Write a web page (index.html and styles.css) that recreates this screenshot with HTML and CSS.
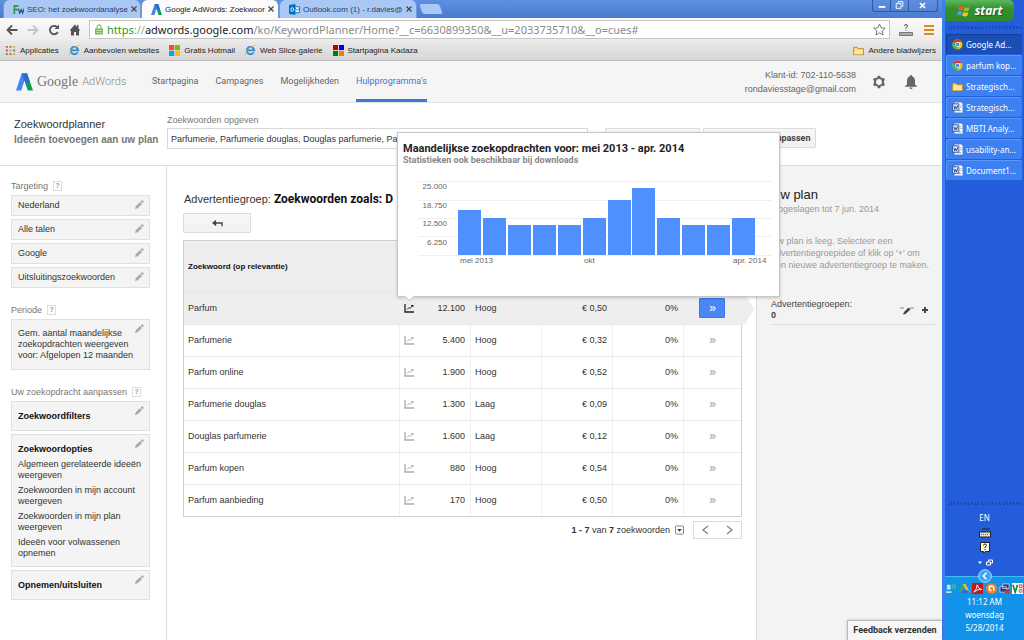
FILE: index.html
```html
<!DOCTYPE html>
<html lang="nl">
<head>
<meta charset="utf-8">
<title>Google AdWords: Zoekwoordplanner</title>
<link rel="stylesheet" href="styles.css">
</head>
<body>
<svg class="defs" aria-hidden="true">
  <symbol id="pencil" viewBox="0 0 10 10"><path d="M0 10l.8-3L5.6 2.200l2.200 2.200L3 9.200zM6.300 1.600L7.300.6q.7-.6 1.400 0l.7.7q.6.7 0 1.400l-1 1z"/></symbol>
  <symbol id="trend" viewBox="0 0 10 9"><path d="M1 0v8h9" fill="none" stroke="currentColor" stroke-width="1.300"/><path d="M3 5.500l2-2 1 1L8.500 2M7 1.500h2V3" fill="none" stroke="currentColor"/></symbol>
  <symbol id="aw" viewBox="0 0 18 18"><path d="M6 0h5.500l-6 18H0z" fill="#4285f4"/><path d="M6.500 0h5.300L18 18h-5.500L9 8z" fill="#0f9d58"/><path d="M6.500 0h5.300l2.500 7.500-2 3L9 8z" fill="#3367d6"/></symbol>
  <symbol id="chrome" viewBox="0 0 12 12"><circle cx="6" cy="6" r="5.500" fill="#f4c20d"/><path d="M6 6L1.200 3.200A5.500 5.500 0 0 1 10.800 3.300H6z" fill="#db3236"/><path d="M6 6L1.200 3.200A5.500 5.500 0 0 0 5.500 11.500L8 7z" fill="#3cba54"/><circle cx="6" cy="6" r="2.600" fill="#fff"/><circle cx="6" cy="6" r="2" fill="#4885ed"/></symbol>
  <symbol id="folder" viewBox="0 0 12 10"><path d="M.5 9.500v-8h4l1 1.500h6v6.500z" fill="#fbd976" stroke="#b98a2c"/><path d="M1 9l1.500-4.500H11L10.500 9z" fill="#ffe9a0"/></symbol>
  <symbol id="word" viewBox="0 0 12 12"><path d="M3 .5h7l1.500 1.500v9.500H3z" fill="#fff" stroke="#aac0e6"/><path d="M6 9.500h4M9 4h1.500M9 6h1.500" stroke="#8097c8"/><path d="M.5 2h7v7h-7z" fill="#dfe8fa" stroke="#36518f"/><path d="M2 4l1 3.500L4 5l1 2.500L6.300 3.500" fill="none" stroke="#27427f"/></symbol>
  <symbol id="ie" viewBox="0 0 12 12"><path d="M9.500 8A4 4 0 1 1 10 5.800H3" fill="none" stroke="#2e8ad8" stroke-width="2"/><path d="M1 11Q-1 8 5 3.500T11 1.500" fill="none" stroke="#e7b93c"/></symbol>
</svg>

<div class="browser">
  <div class="tabstrip">
    <div class="tab">
      <svg class="ico" viewBox="0 0 12 10"><path d="M1.500 10V1h4.500M1.500 5.200h4" fill="none" stroke="#2e9a3a" stroke-width="1.800"/><path d="M6 4l1.300 5L9 5l1.500 4L12 4" fill="none" stroke="#26506e" stroke-width="1.200"/></svg>
      <span class="tab-name">SEO: het zoekwoordanalyse</span><button class="x" aria-label="Sluiten"><svg viewBox="0 0 6 6"><path d="M.5.5l5 5M5.500.5l-5 5" stroke="#444" stroke-width="1.200"/></svg></button>
    </div>
    <div class="tab active">
      <svg class="ico"><use href="#aw"/></svg>
      <span class="tab-name">Google AdWords: Zoekwoor</span><button class="x" aria-label="Sluiten"><svg viewBox="0 0 6 6"><path d="M.5.5l5 5M5.500.5l-5 5" stroke="#444" stroke-width="1.200"/></svg></button>
    </div>
    <div class="tab">
      <svg class="ico" viewBox="0 0 12 12"><path d="M6 3h5.500v6.500H6z" fill="#fff" stroke="#0072c6"/><path d="M6 4l3 3 3-3" fill="none" stroke="#0072c6"/><path d="M0 1.200L7 0v12L0 10.800z" fill="#0072c6"/><ellipse cx="3.500" cy="6" rx="1.500" ry="2" fill="none" stroke="#fff"/></svg>
      <span class="tab-name">Outlook.com (1) - r.davies@</span><button class="x" aria-label="Sluiten"><svg viewBox="0 0 6 6"><path d="M.5.5l5 5M5.500.5l-5 5" stroke="#444" stroke-width="1.200"/></svg></button>
    </div>
    <div class="newtab"></div>
    <div class="winbtns">
      <button aria-label="Minimaliseren"><svg viewBox="0 0 18 11"><path d="M6 7h7" stroke="#fff" stroke-width="2"/></svg></button>
      <button aria-label="Herstellen"><svg viewBox="0 0 18 11"><path d="M7.500 2.500v-1h5v5h-1M5.500 3.500h5v5h-5z" fill="none" stroke="#fff"/></svg></button>
      <button class="wide" aria-label="Venster sluiten"><svg viewBox="0 0 28 11"><path d="M11 3l5 5M16 3l-5 5" stroke="#fff" stroke-width="1.600"/></svg></button>
    </div>
  </div>

  <div class="toolbar">
    <button class="nav" aria-label="Terug"><svg viewBox="0 0 12 12"><path d="M11.500 6H2M6 1.500L1.500 6 6 10.500" fill="none" stroke="#555" stroke-width="1.800"/></svg></button>
    <button class="nav" aria-label="Vooruit"><svg viewBox="0 0 12 12"><path d="M.5 6H10M6 1.500L10.500 6 6 10.500" fill="none" stroke="#c4c4c4" stroke-width="1.800"/></svg></button>
    <button class="nav" aria-label="Vernieuwen"><svg viewBox="0 0 12 12"><path d="M9.800 8A4.200 4.200 0 1 1 9 3" fill="none" stroke="#555" stroke-width="1.800"/><path d="M11 .5V5H6.500z" fill="#555"/></svg></button>
    <button class="nav" aria-label="Startpagina"><svg viewBox="0 0 12 12"><path d="M6 .5L.5 6.500H2V11.500h3V8h2v3.500h3V6.500h1.500L9.500 4.500V1H8v2z" fill="#555"/></svg></button>
    <div class="omnibox">
      <svg class="lock" viewBox="0 0 8 11"><path d="M2 5V3a2 2 0 0 1 4 0v2" fill="none" stroke="#8fc27d" stroke-width="1.300"/><path d="M0 4.500h8v6H0z" fill="#79bd62"/><path d="M1 6.500h6M1 8.500h6" stroke="#b4dba5"/></svg>
      <span class="url"><i>https</i><s>://</s><b>adwords.google.com</b>/ko/KeywordPlanner/Home?__c=6630899350&amp;__u=2033735710&amp;__o=cues#</span>
      <svg class="star" viewBox="0 0 13 13"><path d="M6.500 1l1.700 3.800 4 .4-3 2.700.9 4.100-3.600-2.100L2.900 12l.9-4.100-3-2.700 4-.4z" fill="#fff" stroke="#777"/></svg>
    </div>
    <svg class="ext" viewBox="0 0 14 12"><path d="M.5 8.500h13v3H.5z" fill="#aaa" stroke="#777"/><path d="M5.500 2q0-1.500 1.500-1.500T8.500 2Q8.500 3 7 3.500v1M7 5.500v1" fill="none" stroke="#555"/></svg>
    <svg class="burger" viewBox="0 0 10 10"><path d="M0 1h10M0 5h10M0 9h10" stroke="#dc8a1c" stroke-width="2"/></svg>
  </div>

  <div class="bookmarks">
    <a href="#"><svg class="ico" viewBox="0 0 12 12"><path d="M1 2h2M1 6h2M5 10h2" stroke="#db4437" stroke-width="2"/><path d="M5 2h2M9 6h2M1 10h2" stroke="#3b9a4c" stroke-width="2"/><path d="M9 2h2M5 6h2M9 10h2" stroke="#e6a021" stroke-width="2"/></svg>Applicaties</a>
    <a href="#"><svg class="ico"><use href="#ie"/></svg>Aanbevolen websites</a>
    <a href="#"><svg class="ico" viewBox="0 0 12 12"><path d="M0 0h5.600v5.600H0z" fill="#f25022"/><path d="M6.400 0H12v5.600H6.400z" fill="#7fba00"/><path d="M0 6.400h5.600V12H0z" fill="#00a4ef"/><path d="M6.400 6.400H12V12H6.400z" fill="#ffb900"/></svg>Gratis Hotmail</a>
    <a href="#"><svg class="ico"><use href="#ie"/></svg>Web Slice-galerie</a>
    <a href="#"><svg class="ico" viewBox="0 0 12 12"><path d="M0 0h5.500v5.500H0z" fill="#c00000"/><path d="M6.500 0H12v5.500H6.500z" fill="#0000e0"/><path d="M0 6.500h5.500V12H0z" fill="#008000"/><path d="M6.500 6.500H12V12H6.500z" fill="#ff7800"/></svg>Startpagina Kadaza</a>
    <a href="#" class="end"><svg class="ico"><use href="#folder"/></svg>Andere bladwijzers</a>
  </div>

  <div class="page">
    <header class="top">
      <a class="logo" href="#"><svg><use href="#aw"/></svg><span class="goog">Google</span><span class="adw">AdWords</span></a>
      <nav class="menu"><a href="#">Startpagina</a><a href="#">Campagnes</a><a href="#">Mogelijkheden</a><a href="#" class="on">Hulpprogramma's</a></nav>
      <div class="account"><div>Klant-id: 702-110-5638</div><div>rondaviesstage@gmail.com</div></div>
      <button class="plain" aria-label="Instellingen"><svg viewBox="0 0 14 14"><circle cx="7" cy="7" r="4" fill="none" stroke="#666" stroke-width="2.200"/><path d="M7 .8v2M7 11.200v2M1.600 3.900l1.800 1M10.600 9.100l1.800 1M1.600 10.100l1.800-1M10.600 4.900l1.800-1" stroke="#666" stroke-width="2.600"/></svg></button>
      <button class="plain" aria-label="Meldingen"><svg viewBox="0 0 14 14"><path d="M7 0q1.200 0 1.200 1.200Q11 2.200 11 6v3.500l2 1.500v.8H1V11l2-1.500V6q0-3.800 2.800-4.800Q5.800 0 7 0zM5.300 12.500h3.400Q8.500 14 7 14t-1.700-1.500z" fill="#666"/></svg></button>
    </header>

    <section class="planner">
      <div class="name"><h1>Zoekwoordplanner</h1><p>Ideeën toevoegen aan uw plan</p></div>
      <form class="search">
        <label for="kw">Zoekwoorden opgeven</label>
        <div class="search-row">
          <input id="kw" type="text" value="Parfumerie, Parfumerie douglas, Douglas parfumerie, Parfum">
          <button type="button" class="btn">Ideeën ophalen</button>
          <button type="button" class="btn wide">Zoekopdracht aanpassen</button>
        </div>
      </form>
    </section>

    <div class="body">
      <aside class="side">
        <h2>Targeting <button class="q">?</button></h2>
        <div class="stack">
          <div class="card">Nederland<svg><use href="#pencil"/></svg></div>
          <div class="card">Alle talen<svg><use href="#pencil"/></svg></div>
          <div class="card">Google<svg><use href="#pencil"/></svg></div>
          <div class="card">Uitsluitingszoekwoorden<svg><use href="#pencil"/></svg></div>
        </div>
        <h2>Periode <button class="q">?</button></h2>
        <div class="stack">
          <div class="card tall">Gem. aantal maandelijkse zoekopdrachten weergeven voor: Afgelopen 12 maanden<svg><use href="#pencil"/></svg></div>
        </div>
        <h2>Uw zoekopdracht aanpassen <button class="q">?</button></h2>
        <div class="stack">
          <div class="card mid"><b>Zoekwoordfilters</b><svg><use href="#pencil"/></svg></div>
          <div class="card mid options"><b>Zoekwoordopties</b>
            <p>Algemeen gerelateerde ideeën weergeven</p><p>Zoekwoorden in mijn account weergeven</p><p>Zoekwoorden in mijn plan weergeven</p><p>Ideeën voor volwassenen opnemen</p><svg><use href="#pencil"/></svg></div>
          <div class="card mid"><b>Opnemen/uitsluiten</b><svg><use href="#pencil"/></svg></div>
        </div>
      </aside>

      <main class="main">
        <h2 class="group">Advertentiegroep: <b>Zoekwoorden zoals: D</b></h2>
        <button class="btn back" aria-label="Terug"><svg viewBox="0 0 12 8"><path d="M11 7.500V4H2" fill="none" stroke="#444" stroke-width="1.500"/><path d="M4.500.5v7L0 4z" fill="#444"/></svg></button>
        <table class="kw">
          <colgroup><col><col class="c"><col class="c"><col class="c"><col class="c"><col class="d"></colgroup>
          <thead><tr><th colspan="6">Zoekwoord (op relevantie)</th></tr></thead>
          <tbody>
            <tr class="sel"><td>Parfum</td><td><div class="vol"><svg><use href="#trend"/></svg>12.100</div></td><td>Hoog</td><td class="r">€ 0,50</td><td class="r">0%</td><td class="m"><button class="add">»</button></td></tr>
            <tr><td>Parfumerie</td><td><div class="vol"><svg><use href="#trend"/></svg>5.400</div></td><td>Hoog</td><td class="r">€ 0,32</td><td class="r">0%</td><td class="m"><button class="add">»</button></td></tr>
            <tr><td>Parfum online</td><td><div class="vol"><svg><use href="#trend"/></svg>1.900</div></td><td>Hoog</td><td class="r">€ 0,52</td><td class="r">0%</td><td class="m"><button class="add">»</button></td></tr>
            <tr><td>Parfumerie douglas</td><td><div class="vol"><svg><use href="#trend"/></svg>1.300</div></td><td>Laag</td><td class="r">€ 0,09</td><td class="r">0%</td><td class="m"><button class="add">»</button></td></tr>
            <tr><td>Douglas parfumerie</td><td><div class="vol"><svg><use href="#trend"/></svg>1.600</div></td><td>Laag</td><td class="r">€ 0,12</td><td class="r">0%</td><td class="m"><button class="add">»</button></td></tr>
            <tr><td>Parfum kopen</td><td><div class="vol"><svg><use href="#trend"/></svg>880</div></td><td>Hoog</td><td class="r">€ 0,54</td><td class="r">0%</td><td class="m"><button class="add">»</button></td></tr>
            <tr><td>Parfum aanbieding</td><td><div class="vol"><svg><use href="#trend"/></svg>170</div></td><td>Hoog</td><td class="r">€ 0,50</td><td class="r">0%</td><td class="m"><button class="add">»</button></td></tr>
          </tbody>
        </table>
        <div class="pager"><span><b>1 - 7</b> van <b>7</b> zoekwoorden</span>
          <button class="drop" aria-label="Rijen"><svg viewBox="0 0 10 10"><rect x=".5" y=".5" width="9" height="9" rx="1" fill="#fff" stroke="#777"/><path d="M2.500 4h5L5 7z" fill="#333"/></svg></button>
          <div class="pages"><button aria-label="Vorige"><svg viewBox="0 0 8 10"><path d="M6.500 1l-5 4 5 4" fill="none" stroke="#888" stroke-width="1.400"/></svg></button><button aria-label="Volgende"><svg viewBox="0 0 8 10"><path d="M1.500 1l5 4-5 4" fill="none" stroke="#888" stroke-width="1.400"/></svg></button></div>
        </div>

        <div class="popup">
          <h3>Maandelijkse zoekopdrachten voor: mei 2013 - apr. 2014</h3>
          <p>Statistieken ook beschikbaar bij downloads</p>
          <svg class="chart" viewBox="0 0 354 88">
            <path d="M0 1.500h354M0 20.500h354M0 38.500h354M0 56.500h354M0 75.500h354" stroke="#efefef"/>
            <g class="bars">
              <rect x="40" y="30" width="23" height="45"/><rect x="65" y="38" width="23" height="37"/><rect x="90" y="45" width="23" height="30"/><rect x="115" y="45" width="23" height="30"/><rect x="140" y="45" width="23" height="30"/><rect x="165" y="38" width="23" height="37"/><rect x="190" y="20" width="23" height="55"/><rect x="214" y="8" width="23" height="67"/><rect x="239" y="38" width="23" height="37"/><rect x="264" y="45" width="23" height="30"/><rect x="289" y="45" width="23" height="30"/><rect x="314" y="38" width="23" height="37"/>
            </g>
            <g class="ylab"><text x="29" y="9">25.000</text><text x="29" y="28">18.750</text><text x="29" y="46">12.500</text><text x="29" y="65">6.250</text></g>
            <g class="xlab"><text x="42" y="83">mei 2013</text><text x="166" y="83">okt</text><text x="315" y="83">apr. 2014</text></g>
          </svg>
        </div>
      </main>

      <aside class="plan">
        <h2>Uw plan</h2>
        <p class="saved">Opgeslagen tot 7 jun. 2014</p>
        <p class="empty">Uw plan is leeg. Selecteer een advertentiegroepidee of klik op '+' om een nieuwe advertentiegroep te maken.</p>
        <div class="groups"><div>Advertentiegroepen:<br><b>0</b></div>
          <div class="tools"><button class="plain" aria-label="Bewerken"><svg class="quote" viewBox="0 0 14 9"><path d="M1 1v2M3 1v2M11 1v2M13 1v2" stroke="#888"/><path d="M3 8.500L4 6l4.500-4.500L10.500 3.500 5.500 8z" fill="#444"/></svg></button><button class="plain" aria-label="Toevoegen"><svg class="plus" viewBox="0 0 8 8"><path d="M4 1v6M1 4h6" stroke="#444" stroke-width="2"/></svg></button></div>
        </div>
      </aside>
    </div>
    <button class="feedback">Feedback verzenden</button>
  </div>
</div>

<div class="taskbar">
  <button class="start"><svg viewBox="0 0 14 12"><path d="M2 1.500q2.500-1 4.500.3L5.500 5.500Q3.500 4.500 1 5.300z" fill="#ee5b25"/><path d="M7.500 2q2 1.300 5 .3L11.500 6q-2.500 1-5-.3z" fill="#8cc63f"/><path d="M.8 6.500q2.500-1 4.500.3L4.300 10.500Q2.300 9.500 0 10.300z" fill="#4aa0e8"/><path d="M6.200 7q2.300 1.300 5 .3L10.300 11q-2.500 1-5-.3z" fill="#fdc60b"/></svg>start</button>
  <div class="zig"></div>
  <div class="tasks">
    <button class="task cur"><svg><use href="#chrome"/></svg>Google Ad...</button>
    <button class="task"><svg><use href="#chrome"/></svg>parfum kop...</button>
    <button class="task"><svg><use href="#folder"/></svg>Strategisch...</button>
    <button class="task"><svg><use href="#word"/></svg>Strategisch...</button>
    <button class="task"><svg><use href="#word"/></svg>MBTI Analy...</button>
    <button class="task"><svg><use href="#word"/></svg>usability-an...</button>
    <button class="task"><svg><use href="#word"/></svg>Document1...</button>
  </div>
  <div class="zig low"></div>
  <div class="lang"><span>EN</span>
    <svg viewBox="0 0 12 10"><path d="M3 1.500h8" stroke="#222"/><path d="M.5 4.500h11v5H.5z" fill="#e8e6d0" stroke="#222"/><path d="M2 7h8" stroke="#555" stroke-dasharray="1 1"/></svg>
    <svg viewBox="0 0 12 11"><path d="M1.500.5h9v9h-4l-2 1.500v-1.500h-3z" fill="#fffbd8" stroke="#222"/><path d="M4.500 3.500Q4.500 2 6 2t1.500 1.500Q7.500 4.500 6 5v1M6 7v1.200" fill="none" stroke="#222"/></svg>
    <svg class="mini" viewBox="0 0 16 8"><path d="M1 3h4L3 5.500z" fill="#fff"/><path d="M9.500 3.500h4v3h-4zM11.500 3V1.500h4v3H14" fill="none" stroke="#fff"/></svg>
  </div>
  <div class="tray">
    <button class="collapse" aria-label="Verbergen"><svg viewBox="0 0 14 14"><circle cx="7" cy="7" r="6.300" fill="#38a6f2" stroke="#b9e2ff"/><path d="M8.500 3.800L5.300 7l3.200 3.200" fill="none" stroke="#fff" stroke-width="1.600"/></svg></button>
    <div class="tray-icons">
      <svg viewBox="0 0 12 12"><path d="M1 2h4v5H1zM0 9h6v2H0z" fill="#bfe0ee"/><path d="M7 2q1.500 2 0 4M9 1q2.500 3 0 6" fill="none" stroke="#5fe06a"/></svg>
      <svg viewBox="0 0 12 12"><path d="M4 1L0 9l2 2 4-8z" fill="#3aa757"/><path d="M4 1h3l5 9H9z" fill="#fbc116"/><path d="M4 8h7l-1 3H2z" fill="#2a6fe0"/></svg>
      <svg viewBox="0 0 12 12"><path d="M0 0h12v12H0z" fill="#c4161c"/><path d="M2 10Q6 6 5.500 2q2 5 5 5Q6 6.500 2 10z" fill="none" stroke="#fff"/></svg>
      <svg viewBox="0 0 12 12"><circle cx="6" cy="6" r="5.800" fill="#f58220"/><path d="M8.500 8.500V5.500A2.500 2.500 0 1 0 6 8.300" fill="none" stroke="#fff" stroke-width="1.500"/></svg>
      <svg viewBox="0 0 12 12"><path d="M4 1h7v5H4zM1 4h7v6H1z" fill="#253b78" stroke="#b8c8e8"/><path d="M7 7l4 4M11 7l-4 4" stroke="#e02020" stroke-width="1.800"/></svg>
      <svg viewBox="0 0 12 12"><path d="M0 0h12v12H0z" fill="#fff"/><path d="M1 2l2.500 8L6 2" fill="none" stroke="#168a2c" stroke-width="1.800"/><path d="M8 2h3v3H8zM8 7h3v3H8z" fill="none" stroke="#d33"/></svg>
    </div>
    <div>11:12 AM</div><div>woensdag</div><div>5/28/2014</div>
  </div>
</div>
</body>
</html>
```

FILE: styles.css
```css
* { box-sizing: border-box; }
body { margin: 0; height: 100vh; display: flex; overflow: hidden; font: 9px/11px "Liberation Sans", Arial, sans-serif; color: #333; }
h1, h2, h3, p { margin: 0; font-weight: normal; font-size: inherit; }
button { font: inherit; color: inherit; padding: 0; margin: 0; border: 0; background: none; }
a { color: inherit; text-decoration: none; }
svg { display: block; flex: none; }
.defs { position: absolute; width: 0; height: 0; }

.browser { flex: 1; min-width: 0; display: flex; flex-direction: column; }
.toolbar, .taskbar { font-family: "Noto Sans", Tahoma, sans-serif; }
.ico { width: 11px; height: 11px; }

.tabstrip { height: 18px; flex: none; display: flex; background: linear-gradient(#5e8fdf, #4a7bd0); padding-left: 3px; font-size: 8px; }
.tab { width: 138px; height: 18px; display: flex; align-items: center; gap: 3px; padding: 0 7px 0 9px; background: #a9c8f5; color: #2c3e5c; border-radius: 6px 6px 0 0; border: solid #7099d8; border-width: 0 1px; }
.tab.active { background: #fbfbfb; color: #222; }
.tab-name { flex: 1; white-space: nowrap; }
.x svg { width: 6px; height: 6px; }
.newtab { width: 20px; height: 10px; margin: 4px 0 0 4px; background: #a9c8f5; transform: skewX(20deg); border-radius: 2px; }
.winbtns { margin-left: auto; margin-right: 4px; height: 12px; display: flex; border: 1px solid #3158a4; border-top: 0; border-radius: 0 0 3px 3px; }
.winbtns button { width: 18px; border-right: 1px solid #3158a4; }
.winbtns .wide { width: 28px; border-right: 0; }
.winbtns svg { width: 100%; height: 11px; }

.toolbar { height: 23px; flex: none; display: flex; align-items: center; gap: 9px; padding: 0 8px 0 6px; background: linear-gradient(#fafafa, #ececec); }
.nav svg { width: 12px; height: 12px; }
.omnibox { flex: 1; min-width: 0; height: 19px; margin-left: -1px; display: flex; align-items: center; gap: 4px; padding: 0 3px 0 5px; background: #fff; border: 1px solid #c4c4c4; }
.lock { width: 8px; height: 11px; }
.url { flex: 1; min-width: 0; overflow: hidden; white-space: nowrap; font-size: 11px; line-height: 16px; color: #8a8a8a; }
.url b { font-weight: normal; color: #222; }
.url i { font-style: normal; color: #2c9a2c; }
.url s { text-decoration: none; color: #77b877; }
.star { width: 13px; height: 13px; }
.ext { width: 14px; height: 12px; }
.burger { width: 10px; height: 10px; margin-left: 2px; }

.bookmarks { height: 20px; flex: none; display: flex; align-items: center; gap: 10px; padding: 0 6px 0 5px; background: linear-gradient(#e9e9e9, #d6d6d6); border-bottom: 1px solid #bbb; font-size: 8px; color: #222; }
.bookmarks a { display: flex; align-items: center; gap: 4px; white-space: nowrap; }
.bookmarks .end { margin-left: auto; }

.page { flex: 1; min-height: 0; position: relative; display: flex; flex-direction: column; background: #fff; }
.top { height: 42px; flex: none; display: flex; align-items: center; padding: 0 24px 0 16px; background: #f5f5f5; border-bottom: 1px solid #e2e2e2; color: #666; }
.logo { display: flex; align-items: center; gap: 4px; width: 136px; color: #777; }
.logo svg { width: 17px; height: 18px; }
.goog { font: 14px/18px "Liberation Serif", serif; }
.adw { font: 300 11px/18px Roboto, sans-serif; color: #888; }
.menu { flex: 1; display: flex; gap: 17px; align-self: stretch; font-family: Roboto, sans-serif; }
.menu a { display: flex; align-items: center; border: solid transparent; border-width: 3px 0; }
.menu .on { color: #4076d6; border-bottom-color: #4076d6; }
.account { text-align: right; line-height: 14px; margin-right: 16px; }
.plain svg { width: 14px; height: 14px; }
.top .plain + .plain { margin-left: 18px; }

.planner { height: 63px; flex: none; display: flex; border-bottom: 1px solid #dcdcdc; }
.name { width: 167px; flex: none; padding: 13px 0 0 14px; color: #777; }
.name h1 { font-size: 11px; line-height: 16px; color: #333; }
.name p { font-size: 10px; font-weight: bold; line-height: 16px; white-space: nowrap; }
.search { flex: 1; min-width: 0; padding: 11px 126px 0 0; color: #777; }
.search label { display: block; line-height: 12px; }
.search-row { display: flex; gap: 3px; margin-top: 2px; }
.search-row input { flex: 1; min-width: 0; height: 21px; margin-right: 14px; padding: 0 3px; border: 1px solid #d9d9d9; font: inherit; color: #333; }
.btn { width: 95px; height: 20px; background: linear-gradient(#f7f7f7, #f1f1f1); border: 1px solid #dcdcdc; border-radius: 1px; font-family: Roboto, sans-serif; font-weight: bold; color: #444; }
.btn.wide { width: 113px; }

.body { flex: 1; min-height: 0; display: flex; }
.side { width: 167px; flex: none; padding: 14px 16px 0 11px; border-right: 1px solid #dcdcdc; }
.side h2 { display: flex; align-items: center; gap: 5px; height: 12px; margin-bottom: 3px; color: #777; white-space: nowrap; }
.q { width: 9px; height: 10px; border: 1px solid #ddd; font-size: 7px; line-height: 8px; font-weight: bold; color: #999; }
.stack { display: flex; flex-direction: column; gap: 3px; margin-bottom: 16px; }
.card { position: relative; min-height: 21px; padding: 4px 6px; background: #f4f4f4; border: 1px solid #e0e0e0; }
.card > svg { position: absolute; top: 4px; right: 5px; width: 9px; height: 9px; fill: #aaa; }
.tall { padding: 8px 10px 8px 6px; min-height: 51px; }
.mid { padding: 9px 3px 8px 6px; min-height: 29px; }
.mid b { color: #111; }
.options p { margin-top: 4px; }
.options { padding-bottom: 7px; }

.main { flex: 1; min-width: 0; position: relative; padding: 25px 14px 0 16px; }
.group { font-size: 11px; line-height: 16px; white-space: nowrap; padding-left: 1px; margin-bottom: 6px; }
.group b { font-family: Roboto, sans-serif; font-size: 12px; color: #111; }
.back { width: 68px; display: flex; align-items: center; justify-content: center; }
.back svg { width: 11px; height: 8px; }
.kw { width: 100%; margin-top: 7px; table-layout: fixed; border-collapse: separate; border-spacing: 0; border: 1px solid #cfcfcf; }
.kw .c { width: 71px; }
.kw .d { width: 58px; }
.kw th { height: 51px; padding: 0 4px; text-align: left; background: #ededed; font-size: 8px; color: #111; }
.kw td { height: 32px; padding: 0 5px 0 4px; border-top: 1px solid #e8e8e8; border-left: 1px solid #f0f0f0; white-space: nowrap; }
.kw td:first-child { border-left: 0; }
.vol { display: flex; align-items: center; justify-content: space-between; }
.vol svg { width: 10px; height: 9px; color: #aaa; }
.kw .r { text-align: right; }
.kw .m { text-align: center; padding: 0 0 2px; }
.add { width: 26px; height: 20px; font-size: 12px; line-height: 16px; color: #999; }
.sel td { background: #eee; border-left-color: #eee; }
.sel .vol svg { color: #222; }
.sel .add { background: #4a86f5; border: 1px solid #3c78e6; color: #fff; border-radius: 1px; }
.sel .m { position: relative; }
.sel .m::after { content: ""; position: absolute; left: 100%; top: 0; width: 13px; height: 32px; background: #eee; clip-path: polygon(0 0, 25% 0, 100% 50%, 25% 100%, 0 100%); }
.pager { display: flex; justify-content: flex-end; align-items: center; margin-top: 4px; }
.pager svg { width: 9px; height: 10px; }
.drop { margin: 0 9px 0 5px; }
.pages { width: 49px; height: 18px; display: flex; justify-content: space-around; align-items: center; border: 1px solid #dcdcdc; }
.popup { position: absolute; left: 230px; top: -34px; width: 383px; height: 165px; padding: 9px 5px; background: #fff; border: 1px solid #c8c8c8; box-shadow: 0 1px 3px #0003; z-index: 2; font-family: Roboto, sans-serif; }
.popup::after { content: ""; position: absolute; left: 8px; bottom: -4px; width: 6px; height: 6px; background: #fff; border: solid #c8c8c8; border-width: 0 1px 1px 0; transform: rotate(45deg); }
.popup h3 { font-size: 11px; line-height: 13px; font-weight: bold; color: #222; white-space: nowrap; }
.popup p { font-weight: bold; color: #888; }
.chart { width: 354px; height: 88px; margin: 14px 0 0 15px; font-family: "Liberation Sans", Arial, sans-serif; }
.bars { fill: #4d90fe; }
.chart text { font-size: 8px; fill: #666; }
.ylab { text-anchor: end; }

.plan { width: 186px; flex: none; padding: 21px 7px 0 14px; background: #f3f3f3; border-left: 1px solid #dcdcdc; color: #999; }
.plan h2 { font-size: 13px; line-height: 16px; color: #222; }
.saved { line-height: 13px; }
.empty { margin-top: 19px; line-height: 12px; }
.groups { display: flex; justify-content: space-between; align-items: center; margin-top: 28px; padding-bottom: 3px; border-bottom: 1px solid #dcdcdc; color: #444; }
.tools { display: flex; gap: 7px; padding-right: 6px; }
.tools .quote { width: 14px; height: 9px; }
.tools .plus { width: 8px; height: 8px; }
.feedback { position: absolute; right: 0; bottom: 0; width: 95px; height: 20px; background: #f7f7f7; border: 1px solid #bbb; border-width: 1px 0 0 1px; box-shadow: 0 0 3px #0003; font-family: Roboto, sans-serif; font-weight: bold; }

.taskbar { width: 82px; flex: none; display: flex; flex-direction: column; background: #245ddb; border-left: 3px solid #3a80f0; color: #fff; font-size: 8px; white-space: nowrap; }
.start { width: 69px; height: 21px; flex: none; display: flex; align-items: center; justify-content: center; gap: 4px; background: linear-gradient(#5cb85a, #35902f 40%, #2f8a2c); border-radius: 0 5px 6px 0; font: italic bold 12px/14px "Noto Sans", sans-serif; text-shadow: 1px 1px 1px #0006; }
.start svg { width: 14px; height: 12px; }
.zig { height: 3px; margin: 5px 3px; background: repeating-linear-gradient(60deg, #1a41a8 0 1px, transparent 1px 3px); flex: none; }
.tasks { display: flex; flex-direction: column; gap: 1px; padding: 0 2px 0 1px; }
.task { height: 20px; display: flex; align-items: center; gap: 3px; padding-left: 5px; background: #3c80f2; border: solid #5c98f8; border-width: 1px 0 0 1px; border-radius: 2px; }
.task svg { width: 11px; height: 11px; }
.task.cur { background: #1c4fb5; border-color: #153f96; }
.low { margin-top: auto; margin-bottom: 7px; }
.lang { display: flex; flex-direction: column; align-items: center; gap: 4px; }
.lang svg { width: 12px; height: 11px; }
.lang .mini { width: 16px; height: 11px; }
.tray { margin-top: 8px; height: 64px; flex: none; background: #1392ea; border-top: 1px solid #46bdf7; display: flex; flex-direction: column; align-items: center; line-height: 13px; }
.collapse { margin-top: -8px; }
.collapse svg { width: 14px; height: 14px; }
.tray-icons { align-self: stretch; display: flex; justify-content: space-between; padding: 0 1px; margin-bottom: 1px; }
.tray-icons svg { width: 11px; height: 11px; }
```
